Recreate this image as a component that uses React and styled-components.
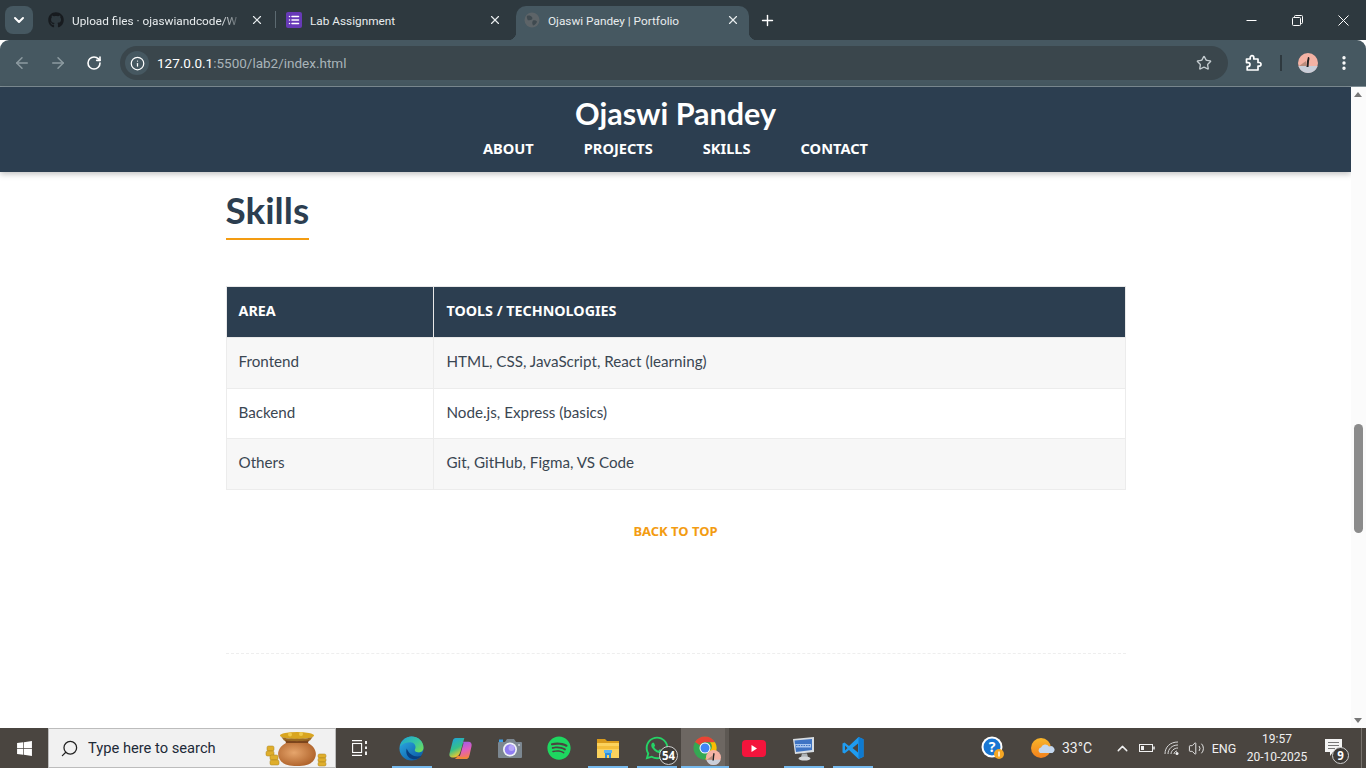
import React from "react";
import styled, { createGlobalStyle } from "styled-components";
import { FaGithub, FaSpotify, FaWhatsapp, FaWindows } from "react-icons/fa";
import {
  ArrowLeft,
  ArrowRight,
  RotateCw,
  Info,
  Star,
  EllipsisVertical,
  X,
  Plus,
  ChevronDown,
  ChevronUp,
  Search,
  Volume2,
  List,
} from "lucide-react";

const GlobalStyle = createGlobalStyle`
  html, body { margin: 0; padding: 0; height: 100%; overflow: hidden; }
  * { box-sizing: border-box; }
  body { font-family: "Lato", sans-serif; }
`;

const Screen = styled.div`
  width: 1366px;
  height: 768px;
  display: flex;
  flex-direction: column;
  overflow: hidden;
  background: #fff;
`;

/* browser chrome */
const TabBar = styled.div`
  height: 40px;
  flex: none;
  background: #2e393f;
  display: flex;
  align-items: flex-end;
  padding-left: 5px;
  color: #fff;
`;

const TabMenu = styled.div`
  width: 28px;
  height: 28px;
  margin: 0 7px 6px 0;
  border-radius: 8px;
  background: #465861;
  display: flex;
  align-items: center;
  justify-content: center;
`;

const Tab = styled.div`
  position: relative;
  width: 233px;
  height: 34px;
  margin-right: 5px;
  padding: 0 9px 6px 8px;
  display: flex;
  align-items: center;
  gap: 8px;
  border-radius: 10px 10px 0 0;
  font: 11.8px "Roboto", sans-serif;
  color: #e8ecee;
`;

const PlainTab = styled(Tab)`
  &::after {
    content: "";
    display: ${(props) => (props.$divider ? "block" : "none")};
    position: absolute;
    right: -3px;
    top: 5px;
    width: 1px;
    height: 17px;
    background: #5c6a71;
  }
`;

const ActiveTab = styled(Tab)`
  background: #465861;

  &::before,
  &::after {
    content: "";
    position: absolute;
    bottom: 0;
    width: 8px;
    height: 8px;
  }
  &::before {
    left: -8px;
    background: radial-gradient(circle at 0 0, transparent 8px, #465861 8.5px);
  }
  &::after {
    right: -8px;
    background: radial-gradient(circle at 100% 0, transparent 8px, #465861 8.5px);
  }
`;

const TabTitle = styled.span`
  flex: 1;
  min-width: 0;
  padding-top: 1px;
  overflow: hidden;
  white-space: nowrap;
`;

const FadedTitle = styled(TabTitle)`
  mask-image: linear-gradient(to right, #000 88%, transparent 100%);
`;

const FormIcon = styled.span`
  width: 16px;
  height: 16px;
  flex: none;
  border-radius: 2px;
  background: #673ab7;
  display: flex;
  align-items: center;
  justify-content: center;
`;

const NewTab = styled.div`
  width: 28px;
  height: 28px;
  margin: 0 0 6px -1px;
  display: flex;
  align-items: center;
  justify-content: center;
`;

const WindowControls = styled.div`
  margin-left: auto;
  align-self: stretch;
  display: flex;
`;

const WindowButton = styled.div`
  width: 46px;
  display: flex;
  align-items: center;
  justify-content: center;
`;

const Toolbar = styled.div`
  height: 47px;
  flex: none;
  background: #465861;
  border-radius: 9px 9px 0 0;
  border-bottom: 1px solid #7f8e95;
  padding: 6px 0 6px 4px;
  display: flex;
  align-items: center;
  color: #fff;
`;

const NavIcon = styled.div`
  width: 36px;
  height: 34px;
  flex: none;
  display: flex;
  align-items: center;
  justify-content: center;
  color: ${(props) => (props.$dim ? "#8d9ba1" : "#fff")};
`;

const Omnibox = styled.div`
  width: 1108px;
  height: 34px;
  margin: 0 8px;
  padding: 0 16px 0 5px;
  border-radius: 17px;
  background: #3a464c;
  display: flex;
  align-items: center;
  font: 13.5px "Roboto", sans-serif;
`;

const InfoChip = styled.div`
  width: 24px;
  height: 24px;
  margin-right: 8px;
  border-radius: 50%;
  background: #465861;
  display: flex;
  align-items: center;
  justify-content: center;
`;

const Host = styled.span`
  color: #fff;
`;

const UrlRest = styled.span`
  color: #a9b4b9;
`;

const StarSlot = styled.div`
  margin-left: auto;
  display: flex;
  color: #c3cbcf;
`;

const ToolDivider = styled.div`
  width: 2px;
  height: 16px;
  margin: 0 16px 0 8px;
  background: #2e393f;
`;

const Avatar = styled.span`
  display: flex;
  flex: none;
  margin-right: 17px;
`;

/* the portfolio page */
const Viewport = styled.div`
  height: 641px;
  flex: none;
  display: flex;
`;

const Page = styled.div`
  width: 1351px;
  display: flex;
  flex-direction: column;
  background: #fff;
`;

const SiteHeader = styled.header`
  height: 85px;
  flex: none;
  background: #2c3e50;
  color: #fff;
  box-shadow: 0 2px 6px rgba(0, 0, 0, 0.25);
  display: flex;
  flex-direction: column;
  align-items: center;
  padding-top: 7px;
`;

const SiteTitle = styled.h1`
  margin: 0;
  font: 700 30.5px/38px "Lato", sans-serif;
`;

const SiteNav = styled.nav`
  display: flex;
  margin-top: 6px;
  font: 700 14.6px/20px "Noto Sans", sans-serif;
  text-transform: uppercase;
  gap: 50px;
`;

const Main = styled.main`
  width: 900px;
  margin: 0 auto;
  padding-top: 16px;
`;

const SectionTitle = styled.h2`
  display: inline-block;
  margin: 0 0 46px;
  padding-bottom: 6px;
  border-bottom: 2px solid #f39c12;
  color: #2c3e50;
  font: 700 36.9px/44px "Lato", sans-serif;
`;

const Table = styled.table`
  width: 100%;
  border-collapse: collapse;
  font: 400 15.2px/20px "Lato", sans-serif;
  color: #3a4652;
`;

const Th = styled.th`
  height: 51px;
  padding: 0 12px 3px;
  text-align: left;
  background: #2c3e50;
  color: #fff;
  border: 1px solid #e8e8e8;
  font: 700 14.3px/20px "Noto Sans", sans-serif;
  text-transform: uppercase;
  width: ${(props) => props.$width || "auto"};

  & + & {
    padding-left: 13px;
  }
`;

const Td = styled.td`
  height: 50.5px;
  padding: 0 12px 3px;
  border: 1px solid #ececec;

  & + & {
    padding-left: 13px;
  }
`;

const Tr = styled.tr`
  background: ${(props) => (props.$striped ? "#f7f7f7" : "#fff")};
`;

const BackToTop = styled.a`
  display: block;
  margin-top: 31px;
  text-align: center;
  color: #f39c12;
  font: 700 13px/20px "Noto Sans", sans-serif;
  text-transform: uppercase;
`;

const PageRule = styled.hr`
  margin: 112px 0 0;
  border: 0;
  border-top: 1px dashed #eee;
`;

const Scrollbar = styled.div`
  position: relative;
  width: 15px;
  background: #fbfbfb;
`;

const ScrollArrow = styled.div`
  position: absolute;
  left: 3px;
  ${(props) => (props.$down ? "bottom: 5px;" : "top: 5px;")}
  width: 0;
  height: 0;
  border-left: 4.5px solid transparent;
  border-right: 4.5px solid transparent;
  ${(props) => (props.$down ? "border-top: 5px solid #777;" : "border-bottom: 5px solid #777;")}
`;

const ScrollThumb = styled.div`
  position: absolute;
  top: 337px;
  left: 3px;
  width: 9px;
  height: 109px;
  border-radius: 5px;
  background: #8b8b8b;
`;

/* windows taskbar */
const Taskbar = styled.div`
  height: 40px;
  flex: none;
  background: #4a4540;
  display: flex;
  color: #fff;
`;

const StartButton = styled.div`
  width: 48px;
  display: flex;
  align-items: center;
  justify-content: center;
`;

const SearchBox = styled.div`
  position: relative;
  width: 288px;
  padding-left: 11px;
  display: flex;
  align-items: center;
  gap: 9px;
  background: #f1f1f1;
  border: 1px solid #bcbcbc;
  color: #1d2a38;
  font: 14.7px "Roboto", sans-serif;
`;

const SearchGlass = styled.span`
  display: flex;
  transform: scaleX(-1);
  color: #222;
`;

const PotArt = styled.svg`
  position: absolute;
  right: 6px;
  bottom: 0;
`;

const TaskCell = styled.div`
  position: relative;
  width: ${(props) => props.$w || 49}px;
  display: flex;
  align-items: center;
  justify-content: center;

  &::after {
    content: "";
    display: ${(props) => (props.$running ? "block" : "none")};
    position: absolute;
    bottom: 0;
    left: 4.5px;
    right: 4.5px;
    height: 2px;
    background: #76b9ed;
  }
`;

const ChromeCell = styled(TaskCell)`
  width: 48px;
  background: #6d6762;
  border-left: 4px solid #6d6762;
  border-right: 4px solid #5d5853;
  &::after {
    left: -4px;
    right: -4px;
  }
`;

const CountBadge = styled.span`
  position: absolute;
  right: ${(props) => props.$right}px;
  bottom: ${(props) => props.$bottom}px;
  width: ${(props) => props.$size || 20}px;
  height: ${(props) => props.$size || 20}px;
  border-radius: 50%;
  border: 1px solid #cfcfcf;
  background: #3d3a37;
  color: #fff;
  display: flex;
  align-items: center;
  justify-content: center;
  font: 700 11.5px "Noto Sans", sans-serif;
`;

const ChromeProfile = styled.span`
  position: absolute;
  right: 4px;
  bottom: 3px;
  display: flex;
`;

const Tray = styled.div`
  margin-left: auto;
  display: flex;
  font: 12.5px "Roboto", sans-serif;
  color: #f0f0f0;
`;

const TrayCell = styled.div`
  position: relative;
  width: ${(props) => props.$w}px;
  display: flex;
  align-items: center;
  justify-content: center;
`;

const WeatherCell = styled.div`
  width: 94px;
  padding-left: 15px;
  display: flex;
  align-items: center;
  gap: 7px;
`;

const NotifyCell = styled(TrayCell)`
  padding-right: 9px;
`;

const TempText = styled.span`
  font-size: 14px;
`;

const Clock = styled.div`
  text-align: center;
  line-height: 18px;
  font-size: 12px;
`;

const DesktopEdge = styled.div`
  width: 5px;
  border-left: 1px solid #77726d;
`;

const TaskView = styled.svg`
  margin-right: 5px;
`;

const WhatsappGreen = styled(FaWhatsapp)`
  color: #25d366;
`;

const SpotifyGreen = styled(FaSpotify)`
  color: #1ed760;
`;

const GithubDark = styled(FaGithub)`
  color: #171b1f;
  flex: none;
`;

const CloseIcon = styled(X)`
  flex: none;
`;

const rows = [
  { area: "Frontend", tools: "HTML, CSS, JavaScript, React (learning)" },
  { area: "Backend", tools: "Node.js, Express (basics)" },
  { area: "Others", tools: "Git, GitHub, Figma, VS Code" },
];

const Pot = () => (
  <PotArt width="64" height="36" viewBox="0 0 64 36">
    <defs>
      <radialGradient id="clay" cx="0.42" cy="0.42" r="0.7">
        <stop offset="0" stopColor="#e6a56c" />
        <stop offset="1" stopColor="#a85a22" />
      </radialGradient>
    </defs>
    <ellipse cx="32" cy="4.500" rx="17" ry="3.500" fill="#d9a520" />
    <circle cx="25" cy="3.500" r="2" fill="#efc94a" />
    <circle cx="36" cy="3" r="2" fill="#efc94a" />
    <path d="M16 5.500c2 3 30 3 32 0l-3 4c-5 2-21 2-26 0z" fill="#9a6a25" />
    <path d="M20 9c2 1.500 22 1.500 24 0l-1 3H21z" fill="#7c451c" />
    <path d="M21 12c-8 4-9 11-7 15 2 5 7 8 18 8s16-3 18-8c2-4 1-11-7-15z" fill="url(#clay)" />
    <g fill="#dfae2c" stroke="#a9801b" strokeWidth="0.500">
      <rect x="2" y="15" width="7" height="5" rx="1.500" />
      <rect x="1" y="20" width="8" height="5" rx="1.500" />
      <rect x="5" y="24" width="8" height="5" rx="1.500" />
      <rect x="5" y="29" width="9" height="5" rx="1.500" />
      <rect x="53" y="23" width="8" height="4" rx="1.500" />
      <rect x="53" y="27" width="8" height="4" rx="1.500" />
      <rect x="53" y="31" width="8" height="4" rx="1.500" />
    </g>
  </PotArt>
);

const TaskViewIcon = () => (
  <TaskView width="15" height="16" viewBox="0 0 15 16" fill="none" stroke="#fff" strokeWidth="1.100">
    <path d="M0 .6h10M0 15.400h10" />
    <rect x="0.600" y="3.500" width="9" height="9" />
    <path d="M14 1v3M14 6.500v2.500M14 11.500v3.500" strokeWidth="1.800" />
  </TaskView>
);

const EdgeIcon = () => (
  <svg width="25" height="25" viewBox="0 0 26 26">
    <defs>
      <linearGradient id="edgeA" x1="0" y1="0" x2="0.800" y2="1">
        <stop offset="0" stopColor="#2fb2e8" />
        <stop offset="1" stopColor="#0c5aa6" />
      </linearGradient>
      <linearGradient id="edgeB" x1="0" y1="0" x2="1" y2="0.800">
        <stop offset="0" stopColor="#1aa3d8" />
        <stop offset="0.600" stopColor="#39c6a0" />
        <stop offset="1" stopColor="#6fdc5a" />
      </linearGradient>
    </defs>
    <circle cx="13" cy="13" r="12.500" fill="url(#edgeA)" />
    <path d="M1 11C3 4 8 .5 13 .5c7 0 12.500 5 12.500 11.500 0 4-3 5.500-6 5-3.500-.5-3.500-2.500-2.500-4 1-3-1.500-6.500-5-6.500-4.500 0-8.500 1.500-11 4.500z" fill="url(#edgeB)" />
    <path d="M8 13c-1.500 5 1 10 6 11 3.500.7 7-.5 9.500-3.500-3 1-7.500 1.500-11-1.500-2.500-1.800-3.500-4-4.500-6z" fill="#083f80" />
  </svg>
);

const CopilotIcon = () => (
  <svg width="25" height="25" viewBox="0 0 26 26">
    <defs>
      <linearGradient id="copA" x1="0" y1="0" x2="0.400" y2="1">
        <stop offset="0" stopColor="#1c9fe8" />
        <stop offset="0.600" stopColor="#35c08a" />
        <stop offset="1" stopColor="#f5c828" />
      </linearGradient>
      <linearGradient id="copB" x1="0" y1="0" x2="0.300" y2="1">
        <stop offset="0" stopColor="#8a5cf0" />
        <stop offset="0.600" stopColor="#e05ec0" />
        <stop offset="1" stopColor="#f57a5a" />
      </linearGradient>
    </defs>
    <path d="M8 2h9l-4 14c-1 3-2 5-5 6-2 .4-3 .6-4 .4-2-.6-3-2-2.500-4L5 5c.5-2 1.500-3 3-3z" fill="url(#copA)" />
    <path d="M14 6h7c3 0 4 2 3.500 4.500l-2 9c-.7 3-2.500 4.500-5 4.500H7c3-.5 5-2 6-5l3-11c.3-1-.5-2.500-2-2.500z" fill="url(#copB)" />
    <path d="M7 24h11c2 0 3.500-1 4-3-4 2-9 1-12-1-.5 2-1.500 3.200-3 4z" fill="#f0883a" />
  </svg>
);

const CameraIcon = () => (
  <svg width="26" height="24" viewBox="0 0 26 24">
    <path d="M2 6h6l2-3h7l2 3h5a1 1 0 0 1 1 1v14a1 1 0 0 1-1 1H2a1 1 0 0 1-1-1V7a1 1 0 0 1 1-1z" fill="#7c8791" />
    <path d="M2 3.500h4V6H2z" fill="#3aa0e8" />
    <circle cx="13" cy="13.500" r="7" fill="#eef1f6" />
    <circle cx="13" cy="13.500" r="5.300" fill="#8f7cf2" />
    <circle cx="14.500" cy="12" r="3" fill="#b7a7f8" />
    <circle cx="22" cy="9" r="1" fill="#c9ced3" />
  </svg>
);

const FolderIcon = () => (
  <svg width="24" height="22" viewBox="0 0 24 22">
    <path d="M1 2h8l2 2h12v3H1z" fill="#d99b1c" />
    <path d="M1 6h22v15H1z" fill="#fbd25d" />
    <path d="M1 9h22v3H1z" fill="#f4bf3c" />
    <path d="M9 14h6v7h-2v-3h-2v3H9z" fill="#2b8fe0" />
    <path d="M8 13h8v3H8z" fill="#5cb4f0" />
  </svg>
);

const ChromeIcon = () => (
  <svg width="24" height="24" viewBox="0 0 48 48">
    <circle cx="24" cy="24" r="23" fill="#34a853" />
    <path d="M24 1a23 23 0 0 1 20 11.500H24a11.500 11.500 0 0 0-10 6L4 12A23 23 0 0 1 24 1z" fill="#ea4335" />
    <path d="M44 12.500a23 23 0 0 1-20 34.500l10-17.500a11.500 11.500 0 0 0 0-17z" fill="#fbbc04" />
    <circle cx="24" cy="24" r="11" fill="#fff" />
    <circle cx="24" cy="24" r="9" fill="#4285f4" />
  </svg>
);

const ProfileIcon = ({ size }) => (
  <svg width={size} height={size} viewBox="0 0 20 20">
    <circle cx="10" cy="10" r="10" fill="#f4b2a4" />
    <path d="M.5 13h19A10 10 0 0 1 .5 13z" fill="#c9ced9" />
    <path d="M1 13l7-5v5z" fill="#b98c7c" />
    <path d="M10 4c2-.5 1.500 2 1 4l-.5 6H8.500L9 8z" fill="#222" />
  </svg>
);

const ExtensionIcon = () => (
  <svg width="18" height="18" viewBox="0 0 18 18" fill="none" stroke="#fff" strokeWidth="1.700" strokeLinejoin="round">
    <path d="M1.500 5h3.700V3.500a1.800 1.800 0 0 1 3.600 0V5h4.200v3.500h1.200a1.800 1.800 0 0 1 0 3.600h-1.200V16H2.200v-3.400h.8a2 2 0 0 0 0-4h-1.500z" />
  </svg>
);

const GlobeFavicon = () => (
  <svg width="16" height="16" viewBox="0 0 16 16">
    <circle cx="8" cy="8" r="7.500" fill="#5d6468" />
    <path d="M3 4c2-1 4 0 5 1s0 3-1.500 3S4 9 3.500 7.500 2.500 5 3 4zM9 8.500c1.500-.5 3 0 4 1-.5 2-2 3.500-4 4-.5-1.500-1.500-3 0-5z" fill="#3f4a50" />
  </svg>
);

const BrandYoutube = () => (
  <svg width="24" height="17" viewBox="0 0 24 17">
    <rect width="24" height="17" rx="4" fill="#f4143c" />
    <path d="M9.500 5l5.500 3.500-5.500 3.500z" fill="#fff" />
  </svg>
);

const RemoteIcon = () => (
  <svg width="24" height="25" viewBox="0 0 24 25">
    <path d="M1 3l21-2v15L3 18z" fill="#d8dde2" />
    <path d="M2.500 4.500L20 3v11L4 16z" fill="#3e74c4" />
    <path d="M3 8h16v3.500H4z" fill="#a8c6ef" />
    <path d="M4 9.500h14" stroke="#3e74c4" strokeDasharray="1.500 1" />
    <path d="M10 17.500h5l1 3.500H9z" fill="#aeb3b7" />
    <ellipse cx="12.500" cy="22.500" rx="6" ry="2" fill="#d3d6d9" />
  </svg>
);

const CodeIcon = () => (
  <svg width="24" height="24" viewBox="0 0 24 24">
    <path d="M17.500 1L8 10 3.500 6.500 1.500 7.500v9l2 1L8 14l9.500 9 5-2.200V3.200zM4 14.500v-5L6.500 12zM17 16.500L11.500 12 17 7.500z" fill="#1f9cf0" />
    <path d="M17.500 1l5 2.200v17.600l-5 2.200z" fill="#0e7ad1" />
  </svg>
);

const HelpIcon = () => (
  <svg width="24" height="24" viewBox="0 0 24 24">
    <circle cx="12" cy="11" r="10.500" fill="#fff" />
    <circle cx="12" cy="11" r="8.500" fill="#1976d2" />
    <text x="12" y="16" textAnchor="middle" fontFamily="Noto Sans" fontWeight="700" fontSize="14" fill="#fff">?</text>
    <circle cx="19" cy="18" r="5" fill="#f5a623" />
    <rect x="18.300" y="15.500" width="1.400" height="5" fill="#fff" />
  </svg>
);

const WeatherIcon = () => (
  <svg width="24" height="22" viewBox="0 0 24 22">
    <defs>
      <linearGradient id="sun" x1="0" y1="0" x2="0" y2="1">
        <stop offset="0" stopColor="#f9b62a" />
        <stop offset="1" stopColor="#f2801c" />
      </linearGradient>
    </defs>
    <circle cx="10" cy="11" r="10" fill="url(#sun)" />
    <path d="M9 16a3 3 0 0 1 1-5.500 4.500 4.500 0 0 1 8-1 3.500 3.500 0 0 1 3.500 6.500z" fill="#c4d7ee" />
  </svg>
);

const BatteryIcon = () => (
  <svg width="16" height="10" viewBox="0 0 16 10" fill="none" stroke="#f0f0f0">
    <rect x="0.500" y="1.500" width="13" height="7" />
    <rect x="2" y="3" width="3" height="4" fill="#f0f0f0" stroke="none" />
    <path d="M15 3.500v3" strokeWidth="1.500" />
  </svg>
);

const WifiIcon = () => (
  <svg width="16" height="14" viewBox="0 0 16 14" fill="none" stroke="#d8d8d8">
    <path d="M1 13C1 6 6 1 14 1M4 13c0-5 4-9 10-9M7 13c0-3 3-6 7-6M10 13c0-1.500 1.500-3 3-3" />
    <circle cx="13" cy="12.500" r="1.500" fill="#f0f0f0" stroke="none" />
  </svg>
);

const NotifyIcon = () => (
  <svg width="17" height="18" viewBox="0 0 17 18">
    <path d="M0 0h17v13H8l-3 4v-4H0z" fill="#f4f4f4" />
    <path d="M3 3.500h11M3 6.500h11M3 9.500h7" stroke="#777" strokeWidth="1" />
  </svg>
);

const App = () => (
  <Screen>
    <GlobalStyle />
    <TabBar>
      <TabMenu>
        <ChevronDown size={16} strokeWidth={3} />
      </TabMenu>
      <PlainTab $divider>
        <GithubDark size={16} />
        <FadedTitle>Upload files · ojaswiandcode/W</FadedTitle>
        <CloseIcon size={14} strokeWidth={2} />
      </PlainTab>
      <PlainTab>
        <FormIcon>
          <List size={12} strokeWidth={3} color="#fff" />
        </FormIcon>
        <TabTitle>Lab Assignment</TabTitle>
        <CloseIcon size={14} strokeWidth={2} />
      </PlainTab>
      <ActiveTab>
        <GlobeFavicon />
        <TabTitle>Ojaswi Pandey | Portfolio</TabTitle>
        <CloseIcon size={14} strokeWidth={2} />
      </ActiveTab>
      <NewTab>
        <Plus size={17} strokeWidth={2} />
      </NewTab>
      <WindowControls>
        <WindowButton>
          <svg width="11" height="11" viewBox="0 0 11 11" stroke="#fff">
            <path d="M0.500 5.500h10" />
          </svg>
        </WindowButton>
        <WindowButton>
          <svg width="11" height="11" viewBox="0 0 11 11" fill="none" stroke="#fff">
            <rect x="0.500" y="2.500" width="8" height="8" rx="1" />
            <path d="M2.500 2.500V1.500a1 1 0 0 1 1-1h6a1 1 0 0 1 1 1v6a1 1 0 0 1-1 1h-1" />
          </svg>
        </WindowButton>
        <WindowButton>
          <svg width="11" height="11" viewBox="0 0 11 11" stroke="#fff">
            <path d="M0.500 0.500l10 10M10.500 0.500l-10 10" />
          </svg>
        </WindowButton>
      </WindowControls>
    </TabBar>

    <Toolbar>
      <NavIcon $dim>
        <ArrowLeft size={18} />
      </NavIcon>
      <NavIcon $dim>
        <ArrowRight size={18} />
      </NavIcon>
      <NavIcon>
        <RotateCw size={16} strokeWidth={2.4} />
      </NavIcon>
      <Omnibox>
        <InfoChip>
          <Info size={15} />
        </InfoChip>
        <Host>127.0.0.1</Host>
        <UrlRest>:5500/lab2/index.html</UrlRest>
        <StarSlot>
          <Star size={16} />
        </StarSlot>
      </Omnibox>
      <NavIcon>
        <ExtensionIcon />
      </NavIcon>
      <ToolDivider />
      <Avatar>
        <ProfileIcon size={20} />
      </Avatar>
      <EllipsisVertical size={18} strokeWidth={2.5} />
    </Toolbar>

    <Viewport>
      <Page>
        <SiteHeader>
          <SiteTitle>Ojaswi Pandey</SiteTitle>
          <SiteNav>
            <span>About</span>
            <span>Projects</span>
            <span>Skills</span>
            <span>Contact</span>
          </SiteNav>
        </SiteHeader>
        <Main>
          <SectionTitle>Skills</SectionTitle>
          <Table>
            <thead>
              <tr>
                <Th $width="207px">Area</Th>
                <Th>Tools / Technologies</Th>
              </tr>
            </thead>
            <tbody>
              {rows.map((row, i) => (
                <Tr key={row.area} $striped={i % 2 === 0}>
                  <Td>{row.area}</Td>
                  <Td>{row.tools}</Td>
                </Tr>
              ))}
            </tbody>
          </Table>
          <BackToTop>Back to top</BackToTop>
          <PageRule />
        </Main>
      </Page>
      <Scrollbar>
        <ScrollArrow />
        <ScrollThumb />
        <ScrollArrow $down />
      </Scrollbar>
    </Viewport>

    <Taskbar>
      <StartButton>
        <FaWindows size={17} />
      </StartButton>
      <SearchBox>
        <SearchGlass>
          <Search size={19} strokeWidth={1.6} />
        </SearchGlass>
        Type here to search
        <Pot />
      </SearchBox>
      <TaskCell $w={51}>
        <TaskViewIcon />
      </TaskCell>
      <TaskCell $running>
        <EdgeIcon />
      </TaskCell>
      <TaskCell>
        <CopilotIcon />
      </TaskCell>
      <TaskCell>
        <CameraIcon />
      </TaskCell>
      <TaskCell>
        <SpotifyGreen size={24} />
      </TaskCell>
      <TaskCell $running>
        <FolderIcon />
      </TaskCell>
      <TaskCell $running>
        <WhatsappGreen size={26} />
        <CountBadge $right={3} $bottom={3} $size={19}>54</CountBadge>
      </TaskCell>
      <ChromeCell $running>
        <ChromeIcon />
        <ChromeProfile>
          <ProfileIcon size={15} />
        </ChromeProfile>
      </ChromeCell>
      <TaskCell $w={50}>
        <BrandYoutube />
      </TaskCell>
      <TaskCell $running>
        <RemoteIcon />
      </TaskCell>
      <TaskCell $running>
        <CodeIcon />
      </TaskCell>
      <Tray>
        <TrayCell $w={48}>
          <HelpIcon />
        </TrayCell>
        <WeatherCell>
          <WeatherIcon />
          <TempText>33°C</TempText>
        </WeatherCell>
        <TrayCell $w={24}>
          <ChevronUp size={17} />
        </TrayCell>
        <TrayCell $w={26}>
          <BatteryIcon />
        </TrayCell>
        <TrayCell $w={24}>
          <WifiIcon />
        </TrayCell>
        <TrayCell $w={24}>
          <Volume2 size={17} strokeWidth={1.3} />
        </TrayCell>
        <TrayCell $w={32}>ENG</TrayCell>
        <TrayCell $w={74}>
          <Clock>
            19:57
            <br />
            20-10-2025
          </Clock>
        </TrayCell>
        <NotifyCell $w={47}>
          <NotifyIcon />
          <CountBadge $right={12} $bottom={4} $size={17}>9</CountBadge>
        </NotifyCell>
        <DesktopEdge />
      </Tray>
    </Taskbar>
  </Screen>
);

export default App;
